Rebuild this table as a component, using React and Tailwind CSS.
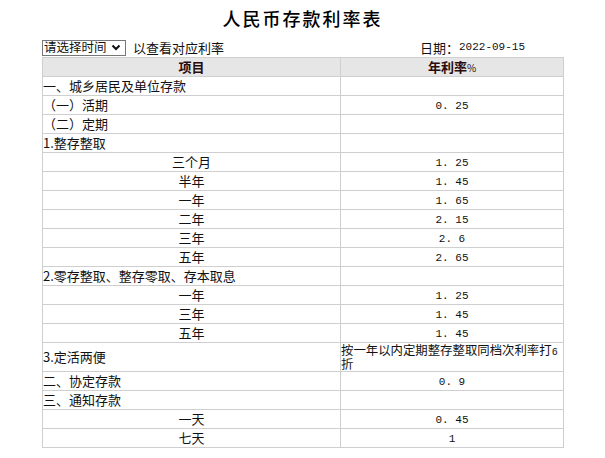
const cn = { fontFamily: '"Noto Sans CJK SC", sans-serif' };
const mono = { fontFamily: '"Liberation Mono", "Noto Sans CJK SC", monospace' };

const rows = [
  { name: "一、城乡居民及单位存款", rate: "" },
  { name: "（一）活期", rate: "0.25" },
  { name: "（二）定期", rate: "" },
  { name: "1.整存整取", rate: "" },
  { name: "三个月", rate: "1.25", center: true },
  { name: "半年", rate: "1.45", center: true },
  { name: "一年", rate: "1.65", center: true },
  { name: "二年", rate: "2.15", center: true },
  { name: "三年", rate: "2.6", center: true },
  { name: "五年", rate: "2.65", center: true },
  { name: "2.零存整取、整存零取、存本取息", rate: "" },
  { name: "一年", rate: "1.25", center: true },
  { name: "三年", rate: "1.45", center: true },
  { name: "五年", rate: "1.45", center: true },
  { name: "3.定活两便", note: true },
  { name: "二、协定存款", rate: "0.9" },
  { name: "三、通知存款", rate: "" },
  { name: "一天", rate: "0.45", center: true },
  { name: "七天", rate: "1", center: true },
];

function Rate({ value }) {
  return (
    <span className="text-[11px]" style={mono}>
      {value.replace(".", ". ")}
    </span>
  );
}

export default function App() {
  return (
    <div className="w-[605px] h-[458px] bg-white text-[#111]" style={cn}>
      <div className="w-[521px] mx-auto">
        <h1 className="pt-[5px] h-[38px] text-center text-[18px] font-medium tracking-[2px] text-black">
          人民币存款利率表
        </h1>
        <div className="flex items-center justify-between h-[19px] pr-[38px]">
          <div className="flex items-center gap-[7px]">
            <div className="flex items-center h-[16px] w-[84px] border border-[#767676] bg-white pl-[1px] text-[12.5px] leading-none whitespace-nowrap">
              <span>请选择时间</span>
              <svg className="ml-[4px] shrink-0" width="10" height="7" viewBox="0 0 10 7">
                <path d="M1.5 1.5 L5 5 L8.5 1.5" fill="none" stroke="#111" strokeWidth="2" />
              </svg>
            </div>
            <span className="text-[13px]">以查看对应利率</span>
          </div>
          <div className="text-[13px] flex items-center">
            <span>日期：</span>
            <span className="text-[11px]" style={mono}>2022-09-15</span>
          </div>
        </div>
        <table className="w-[521px] border-collapse table-fixed text-[13px] leading-[14px]">
          <colgroup>
            <col className="w-[298px]" />
            <col className="w-[223px]" />
          </colgroup>
          <thead>
            <tr className="bg-[#e6e6e6]">
              <th className="h-[19px] p-0 border border-[#cfcfcf] font-bold text-[#2a0a0a]">项目</th>
              <th className="h-[19px] p-0 border border-[#cfcfcf] font-bold text-[#2a0a0a]">
                年利率<span className="text-[10px] font-normal">%</span>
              </th>
            </tr>
          </thead>
          <tbody>
            {rows.map((r, i) => (
              <tr key={i}>
                <td
                  className={
                    "p-0 border border-[#cfcfcf] " +
                    (r.note ? "h-[29px] " : "h-[19px] ") +
                    (r.center ? "text-center" : "text-left")
                  }
                >
                  {r.name}
                </td>
                {r.note ? (
                  <td className="p-0 border border-[#cfcfcf] text-left text-[12.4px] leading-[13px]">
                    <span className="whitespace-nowrap">
                      按一年以内定期整存整取同档次利率打
                      <span className="text-[10px] leading-none" style={mono}>6</span>
                    </span>
                    <br />
                    折
                  </td>
                ) : (
                  <td className="p-0 border border-[#cfcfcf] text-center">
                    {r.rate && <Rate value={r.rate} />}
                  </td>
                )}
              </tr>
            ))}
          </tbody>
        </table>
      </div>
    </div>
  );
}
